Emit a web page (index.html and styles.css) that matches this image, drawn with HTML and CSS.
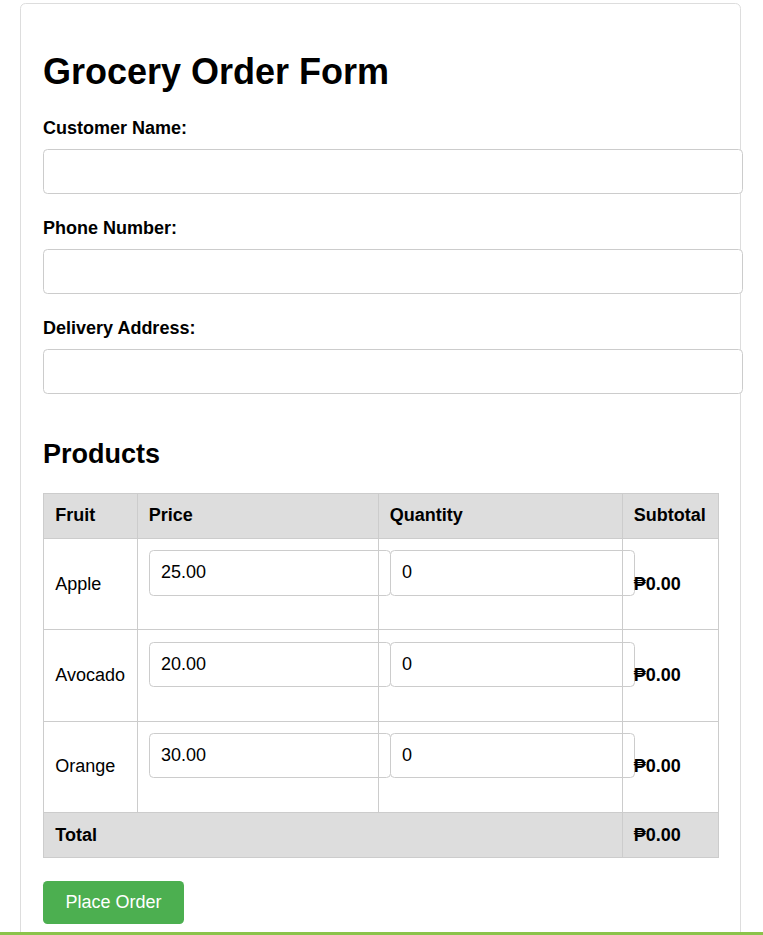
FILE: index.html
```html
<!DOCTYPE html>
<html lang="en">
<head>
<meta charset="utf-8">
<title>Grocery Order Form</title>
<link rel="stylesheet" href="styles.css">
</head>
<body>
<div class="card">
  <h1 class="title">Grocery Order Form</h1>
  <form class="order-form">
    <label class="field-label" for="name">Customer Name:</label>
    <input class="text-input" id="name" type="text">
    <label class="field-label" for="phone">Phone Number:</label>
    <input class="text-input" id="phone" type="text">
    <label class="field-label" for="address">Delivery Address:</label>
    <input class="text-input" id="address" type="text">

    <h2 class="section-title">Products</h2>
    <table class="products">
      <colgroup>
        <col class="col-fruit">
        <col class="col-price">
        <col class="col-qty">
        <col class="col-sub">
      </colgroup>
      <thead>
        <tr><th>Fruit</th><th>Price</th><th>Quantity</th><th>Subtotal</th></tr>
      </thead>
      <tbody>
        <tr>
          <td>Apple</td>
          <td><input class="text-input cell-input" type="text" value="25.00"></td>
          <td><input class="text-input cell-input" type="text" value="0"></td>
          <td class="subtotal">₱0.00</td>
        </tr>
        <tr>
          <td>Avocado</td>
          <td><input class="text-input cell-input" type="text" value="20.00"></td>
          <td><input class="text-input cell-input" type="text" value="0"></td>
          <td class="subtotal">₱0.00</td>
        </tr>
        <tr>
          <td>Orange</td>
          <td><input class="text-input cell-input" type="text" value="30.00"></td>
          <td><input class="text-input cell-input" type="text" value="0"></td>
          <td class="subtotal">₱0.00</td>
        </tr>
      </tbody>
      <tfoot>
        <tr><td colspan="3">Total</td><td>₱0.00</td></tr>
      </tfoot>
    </table>
    <button class="submit" type="button">Place Order</button>
  </form>
</div>
<div class="frame-line"></div>
</body>
</html>
```

FILE: styles.css
```css
html, body {
  margin: 0;
  padding: 0;
  background: #ffffff;
}

body {
  font-family: "Liberation Sans", Arial, "DejaVu Sans", sans-serif;
  font-size: 18px;
  color: #000000;
}

.card {
  width: 675px;
  margin: 3px 0 0 20px;
  padding: 23px 22px 23px;
  border: 1px solid #dddddd;
  border-radius: 5.5px;
  background: #ffffff;
}

.title {
  margin: 24px 0 25.5px;
  font-size: 36px;
  line-height: 41px;
  font-weight: bold;
}

.field-label {
  display: block;
  margin: 0 0 10.5px;
  font-weight: bold;
  line-height: 21px;
}

.text-input {
  display: block;
  box-sizing: content-box;
  width: 100%;
  height: 20.75px;
  margin: 0 0 23.25px;
  padding: 11.25px;
  border: 1px solid #cccccc;
  border-radius: 4.5px;
  font-family: inherit;
  font-size: 18px;
  color: #000000;
  background: #ffffff;
  outline: none;
}

.cell-input {
  margin-bottom: 22.5px;
}

.section-title {
  margin: 0 0 23px;
  padding-top: 21px;
  font-size: 27px;
  line-height: 31px;
  font-weight: bold;
}

.products {
  width: 675px;
  table-layout: fixed;
  border-collapse: collapse;
}

.col-fruit { width: 93.5px; }
.col-price { width: 241px; }
.col-qty { width: 244px; }
.col-sub { width: 96.5px; }

.products th,
.products td {
  padding: 11.25px;
  border: 1px solid #cccccc;
  line-height: 21px;
  text-align: left;
  vertical-align: middle;
}

.products thead th,
.products tfoot td {
  padding-top: 11.75px;
  padding-bottom: 11.75px;
  background: #dddddd;
  font-weight: bold;
}

.subtotal {
  font-weight: bold;
}

.submit {
  display: block;
  margin-top: 22.5px;
  padding: 11.25px 22.5px;
  border: none;
  border-radius: 4.5px;
  background: #4caf50;
  color: #ffffff;
  font-family: inherit;
  font-size: 18px;
  line-height: 20.75px;
  cursor: pointer;
}

.frame-line {
  position: fixed;
  left: 0;
  right: 0;
  bottom: 0;
  height: 3px;
  background: #8bc34a;
}
```
